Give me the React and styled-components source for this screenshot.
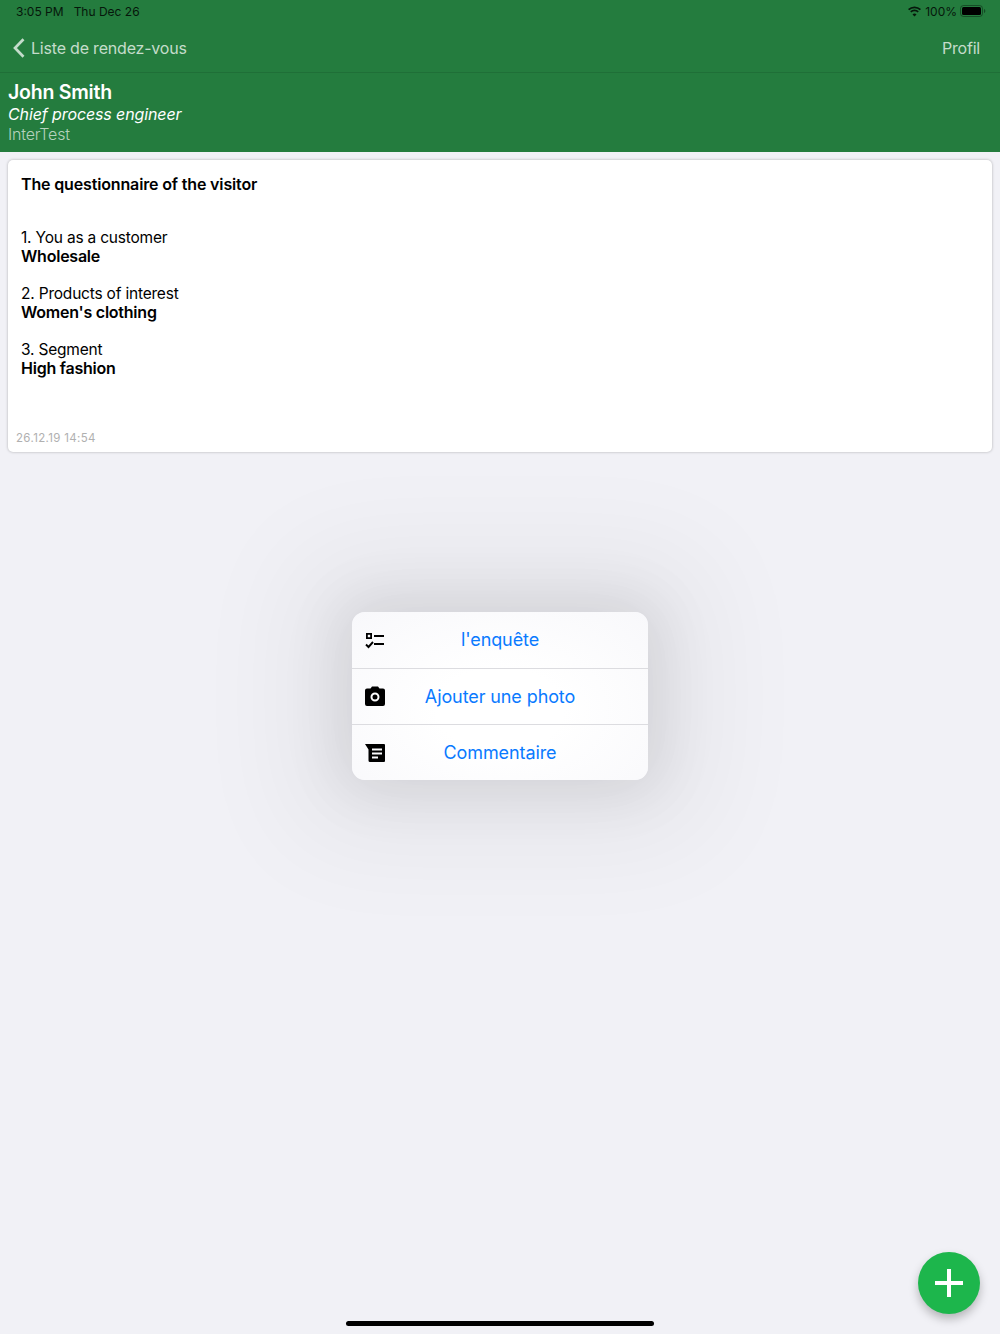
import React from 'react';
import styled, { createGlobalStyle } from 'styled-components';

const GlobalStyle = createGlobalStyle`
  html, body {
    margin: 0;
    padding: 0;
    background: #f1f1f6;
    font-family: Inter, "Liberation Sans", sans-serif;
  }
  * { box-sizing: border-box; }
`;

const Page = styled.div`
  position: relative;
  width: 1000px;
  height: 1334px;
  overflow: hidden;
  background: #f1f1f6;
`;

const Top = styled.header`
  background: #247c3e;
`;

const StatusBar = styled.div`
  height: 24px;
  padding: 0 14px 2px 16px;
  display: flex;
  align-items: center;
  justify-content: space-between;
  font-size: 12px;
  color: #06170b;
`;

const StatusGroup = styled.div`
  display: flex;
  align-items: center;
  gap: ${(p) => p.$gap || 4}px;
`;

const NavBar = styled.div`
  height: 49px;
  padding: 0 20px 0 13px;
  display: flex;
  align-items: center;
  justify-content: space-between;
  border-bottom: 1px solid #1f6f37;
  font-size: 16px;
  letter-spacing: -0.2px;
  color: #c4dccb;
`;

const BackLink = styled.div`
  display: flex;
  align-items: center;
  gap: 6px;
`;

const Visitor = styled.div`
  height: 79px;
  padding: 7px 8px 0;
`;

const Name = styled.div`
  font-size: 19.5px;
  font-weight: 600;
  letter-spacing: -0.23px;
  line-height: 24px;
  color: #fff;
`;

const Role = styled.div`
  font-size: 16px;
  font-style: italic;
  letter-spacing: -0.11px;
  line-height: 20px;
  color: #fff;
`;

const Company = styled.div`
  font-size: 16px;
  font-weight: 300;
  letter-spacing: -0.2px;
  line-height: 20px;
  color: #b5d2bd;
`;

const Card = styled.section`
  margin: 8px 8px 0;
  height: 292px;
  padding: 15px 13px 0;
  position: relative;
  background: #fff;
  border-radius: 5px;
  box-shadow: 0 0 3px rgba(0, 0, 0, 0.28);
  color: #000;
  font-size: 15.5px;
  line-height: 18.5px;
  letter-spacing: -0.2px;
`;

const CardTitle = styled.div`
  font-size: 16px;
  font-weight: 600;
  letter-spacing: -0.15px;
  margin-bottom: 35px;
`;

const Answer = styled.div`
  margin-bottom: 19px;
  b {
    font-size: 16px;
    font-weight: 600;
    letter-spacing: -0.23px;
    display: block;
  }
`;

const Stamp = styled.div`
  position: absolute;
  left: 8px;
  bottom: 6px;
  font-size: 11.5px;
  letter-spacing: 0.35px;
  line-height: 16px;
  color: #b0b0b0;
`;

const Menu = styled.div`
  position: absolute;
  left: 352px;
  top: 612px;
  width: 296px;
  border-radius: 13px;
  background: radial-gradient(ellipse at 50% 58%, #ffffff 30%, #f8f8fb 100%);
  box-shadow: 0 0 60px 10px rgba(0, 0, 0, 0.09), 0 0 110px 60px rgba(0, 0, 0, 0.05);
`;

const MenuRow = styled.div`
  position: relative;
  height: 56px;
  padding-bottom: 1px;
  display: flex;
  align-items: center;
  justify-content: center;
  font-size: 18px;
  letter-spacing: -0.1px;
  color: #0a7aff;
  & + & { border-top: 1px solid #dcdce0; }
`;

const MenuIcon = styled.svg`
  position: absolute;
  left: 11px;
  top: ${(p) => p.$top || 16}px;
  width: 24px;
  height: 24px;
`;

const Fab = styled.div`
  position: absolute;
  left: 918px;
  top: 1252px;
  width: 62px;
  height: 62px;
  border-radius: 50%;
  background: #1db64c;
  box-shadow: 0 5px 10px rgba(0, 0, 0, 0.25);
  display: flex;
  align-items: center;
  justify-content: center;
`;

const HomeBar = styled.div`
  position: absolute;
  left: 346px;
  bottom: 8px;
  width: 308px;
  height: 5px;
  border-radius: 3px;
  background: #000;
`;

const Wifi = () => (
  <svg width="15" height="11" viewBox="0 0 15 11">
    <path d="M7.5 2.2c2 0 3.9.8 5.3 2.1l1.2-1.3A9.6 9.6 0 0 0 7.5.4 9.6 9.6 0 0 0 1 3l1.2 1.3a7.8 7.8 0 0 1 5.3-2.1z" fill="#06170b" />
    <path d="M7.5 5.3c1.2 0 2.3.4 3.1 1.2l1.2-1.3a6.3 6.3 0 0 0-8.6 0l1.2 1.3c.8-.8 1.9-1.2 3.1-1.2z" fill="#06170b" />
    <path d="M7.5 10.6l2-2.2a3 3 0 0 0-4 0z" fill="#06170b" />
  </svg>
);

const Battery = () => (
  <svg width="26" height="12" viewBox="0 0 26 12">
    <rect x="0.5" y="0.5" width="22" height="11" rx="3" fill="none" stroke="#06170b" strokeOpacity="0.45" />
    <rect x="2" y="2" width="19" height="8" rx="1.5" fill="#000" />
    <path d="M24 4v4c.8-.3 1.3-1.1 1.3-2S24.800 4.300 24 4z" fill="#06170b" fillOpacity="0.5" />
  </svg>
);

const Chevron = () => (
  <svg width="12" height="20" viewBox="0 0 12 20">
    <path d="M10.500 1.200 L2 10 L10.500 18.800" fill="none" stroke="#c4dccb" strokeWidth="2.700" />
  </svg>
);

const ChecklistIcon = () => (
  <MenuIcon viewBox="0 0 24 24">
    <path fillRule="evenodd" d="M3 5h6v6H3zM4.800 6.800v2.400h2.400V6.800z" fill="#000" />
    <rect x="11" y="7" width="10" height="2" fill="#000" />
    <rect x="11" y="15" width="10" height="2" fill="#000" />
    <path d="M3 16.500l2.500 2.500L10 14" fill="none" stroke="#000" strokeWidth="1.900" />
  </MenuIcon>
);

const CameraIcon = () => (
  <MenuIcon viewBox="0 0 24 24" $top={15}>
    <path fillRule="evenodd" d="M4 4.500h3.500L9 2.500h6l1.500 2H20a2 2 0 0 1 2 2V20a2 2 0 0 1-2 2H4a2 2 0 0 1-2-2V6.500a2 2 0 0 1 2-2zM12 8.500a4.500 4.500 0 1 0 0 9 4.500 4.500 0 0 0 0-9zM12 10.500a2.500 2.500 0 1 1 0 5 2.500 2.500 0 0 1 0-5z" fill="#000" />
  </MenuIcon>
);

const CommentIcon = () => (
  <MenuIcon viewBox="0 0 24 24">
    <path fillRule="evenodd" d="M2 3h19a1 1 0 0 1 1 1v16a1 1 0 0 1-1 1H7a1.500 1.500 0 0 1-1.500-1.500V8.500L2 3zM9 7.500v2h10v-2zM9 11.500v2h10v-2zM9 15.500v2h6v-2z" fill="#000" />
  </MenuIcon>
);

const answers = [
  { q: '1. You as a customer', a: 'Wholesale' },
  { q: '2. Products of interest', a: "Women's clothing" },
  { q: '3. Segment', a: 'High fashion' },
];

const actions = [
  { label: "l'enquête", icon: <ChecklistIcon /> },
  { label: 'Ajouter une photo', icon: <CameraIcon /> },
  { label: 'Commentaire', icon: <CommentIcon /> },
];

const App = () => {
  return (
    <Page>
      <GlobalStyle />
      <Top>
        <StatusBar>
          <StatusGroup $gap={10}>
            <span>3:05 PM</span>
            <span>Thu Dec 26</span>
          </StatusGroup>
          <StatusGroup $gap={3}>
            <Wifi />
            <span>100%</span>
            <Battery />
          </StatusGroup>
        </StatusBar>
        <NavBar>
          <BackLink>
            <Chevron />
            <span>Liste de rendez-vous</span>
          </BackLink>
          <span>Profil</span>
        </NavBar>
        <Visitor>
          <Name>John Smith</Name>
          <Role>Chief process engineer</Role>
          <Company>InterTest</Company>
        </Visitor>
      </Top>
      <Card>
        <CardTitle>The questionnaire of the visitor</CardTitle>
        {answers.map((item) => (
          <Answer key={item.q}>
            {item.q}
            <b>{item.a}</b>
          </Answer>
        ))}
        <Stamp>26.12.19 14:54</Stamp>
      </Card>
      <Menu>
        {actions.map((action) => (
          <MenuRow key={action.label}>
            {action.icon}
            {action.label}
          </MenuRow>
        ))}
      </Menu>
      <Fab>
        <svg width="28" height="28" viewBox="0 0 28 28">
          <path d="M14 0v28M0 14h28" stroke="#fff" strokeWidth="4" />
        </svg>
      </Fab>
      <HomeBar />
    </Page>
  );
};

export default App;
